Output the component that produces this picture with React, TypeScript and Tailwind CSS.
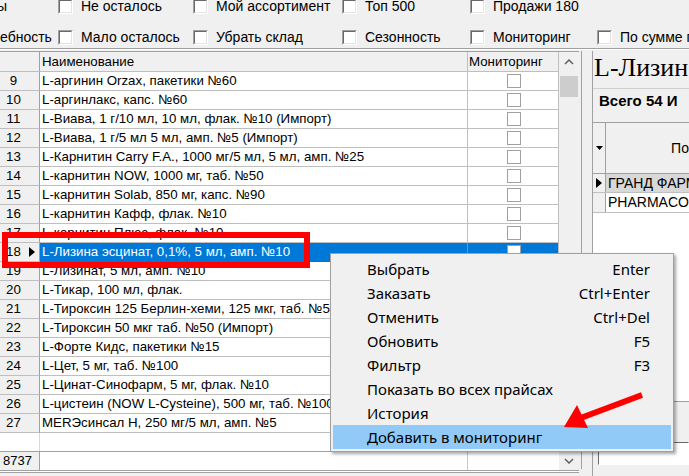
import React from "react";

const rows: [number, string][] = [
  [9, "L-аргинин Orzax, пакетики №60"],
  [10, "L-аргинлакс, капс. №60"],
  [11, "L-Виава, 1 г/10 мл, 10 мл, флак. №10 (Импорт)"],
  [12, "L-Виава, 1 г/5 мл 5 мл, амп. №5 (Импорт)"],
  [13, "L-Карнитин Carry F.A., 1000 мг/5 мл, 5 мл, амп. №25"],
  [14, "L-карнитин NOW, 1000 мг, таб. №50"],
  [15, "L-карнитин Solab, 850 мг, капс. №90"],
  [16, "L-карнитин Кафф, флак. №10"],
  [17, "L-карнитин Плюс, флак. №10"],
  [18, "L-Лизина эсцинат, 0,1%, 5 мл, амп. №10"],
  [19, "L-Лизинат, 5 мл, амп. №10"],
  [20, "L-Тикар, 100 мл, флак."],
  [21, "L-Тироксин 125 Берлин-хеми, 125 мкг, таб. №50 (Импорт)"],
  [22, "L-Тироксин 50 мкг таб. №50 (Импорт)"],
  [23, "L-Форте Кидс, пакетики №15"],
  [24, "L-Цет, 5 мг, таб. №100"],
  [25, "L-Цинат-Синофарм, 5 мг, флак. №10"],
  [26, "L-цистеин (NOW L-Cysteine), 500 мг, таб. №100"],
  [27, "MERЭсинсал Н, 250 мг/5 мл, амп. №5"],
];

const menu: [string, string][] = [
  ["Выбрать", "Enter"],
  ["Заказать", "Ctrl+Enter"],
  ["Отменить", "Ctrl+Del"],
  ["Обновить", "F5"],
  ["Фильтр", "F3"],
  ["Показать во всех прайсах", ""],
  ["История", ""],
  ["Добавить в мониторинг", ""],
];

function Check3D() {
  return (
    <div className="w-[15px] h-[15px] shrink-0 border border-t-[#a0a0a0] border-l-[#a0a0a0] border-b-white border-r-white">
      <div className="w-full h-full bg-white border border-t-[#696969] border-l-[#696969] border-b-[#e3e3e3] border-r-[#e3e3e3]" />
    </div>
  );
}

function CheckCell({ w, label }: { w: string; label: string }) {
  return (
    <div className={`${w} flex items-center shrink-0`}>
      <Check3D />
      <span className="ml-[8px] whitespace-nowrap">{label}</span>
    </div>
  );
}

function Tri({ className }: { className?: string }) {
  return (
    <svg width="6" height="10" viewBox="0 0 6 10" className={className}>
      <polygon points="0,0 6,5 0,10" fill="#000" />
    </svg>
  );
}

export default function App() {
  return (
    <div
      className="relative w-[689px] h-[476px] overflow-hidden bg-[#f0f0f0] text-black"
      style={{ fontFamily: '"Liberation Sans", Arial, sans-serif' }}
    >
      {/* Top filter checkboxes */}
      <div className="h-[49px] border-b border-[#a0a0a0] overflow-hidden text-[14px] leading-[15px]">
        <div className="flex h-[15px] mt-[-1px]">
          <div className="w-[58px] shrink-0 flex items-center">
            <span className="ml-[-3px]">ы</span>
          </div>
          <CheckCell w="w-[135px]" label="Не осталось" />
          <CheckCell w="w-[149px]" label="Мой ассортимент" />
          <CheckCell w="w-[128px]" label="Топ 500" />
          <CheckCell w="w-[127px]" label="Продажи 180" />
        </div>
        <div className="flex h-[15px] mt-[16px]">
          <div className="w-[58px] shrink-0 flex items-center overflow-hidden">
            <span className="whitespace-nowrap">ебность</span>
          </div>
          <CheckCell w="w-[135px]" label="Мало осталось" />
          <CheckCell w="w-[149px]" label="Убрать склад" />
          <CheckCell w="w-[128px]" label="Сезонность" />
          <CheckCell w="w-[127px]" label="Мониторинг" />
          <CheckCell w="w-[200px]" label="По сумме продаж" />
        </div>
      </div>
      <div className="h-[1px] bg-white" />
      <div className="h-[1px]" />

      {/* Main */}
      <div className="flex h-[425px]">
        {/* Left block */}
        <div className="w-[579px] shrink-0 flex flex-col">
          <div className="flex h-[401px]">
            {/* Grid */}
            <div className="w-[559px] flex flex-col border-t border-[#a0a0a0] text-[13.3px]">
              {/* header */}
              <div className="flex h-[20px] bg-[#f0f0f0] border-b border-[#bfbfbf]">
                <div className="w-[40px] border-r border-[#a0a0a0]" />
                <div className="w-[428px] border-r border-[#bfbfbf] pl-[2px] leading-[19px] whitespace-nowrap">
                  Наименование
                </div>
                <div className="w-[91px] border-r border-[#bfbfbf] pl-[1px] leading-[19px] whitespace-nowrap overflow-hidden">
                  Мониторинг
                </div>
              </div>
              {rows.map(([n, name]) => {
                const sel = n === 18;
                return (
                  <div key={n} className="flex h-[19px] shrink-0">
                    <div className="w-[40px] bg-[#f0f0f0] border-r border-[#a0a0a0] border-b border-b-[#bfbfbf] flex items-center">
                      <span className="w-[27px] text-center leading-[18px]">{n}</span>
                      {sel && <Tri className="ml-[2px]" />}
                    </div>
                    <div
                      className={`w-[428px] border-r border-b ${
                        sel ? "bg-[#0078d7] text-white border-r-[#4a9fe3] border-b-[#0078d7]" : "bg-white border-[#bfbfbf]"
                      } pl-[2px] leading-[18px] whitespace-nowrap overflow-hidden`}
                    >
                      {name}
                    </div>
                    <div
                      className={`w-[91px] border-r border-b flex justify-center items-center ${
                        sel ? "bg-[#0078d7] border-r-[#bfbfbf] border-b-[#0078d7]" : "bg-white border-[#bfbfbf]"
                      }`}
                    >
                      <div className="w-[14px] h-[14px] bg-white border border-[#a0a0a0] ml-[2px]" />
                    </div>
                  </div>
                );
              })}
              {/* empty row */}
              <div className="flex h-[19px] bg-white border-b border-[#a0a0a0]">
                <div className="w-[40px] border-r border-[#d8d8d8]" />
                <div className="flex-1" />
              </div>
            </div>
            {/* Scrollbar */}
            <div className="w-[20px] flex flex-col bg-[#f0f0f0] border-t border-[#a0a0a0]">
              <div className="h-[20px] flex items-center justify-center">
                <svg width="10" height="6" viewBox="0 0 10 6">
                  <polyline points="1,5 5,1 9,5" fill="none" stroke="#606060" strokeWidth="1.5" />
                </svg>
              </div>
              <div className="mt-[4px] h-[21px] bg-[#cdcdcd] mx-[1px]" />
            </div>
          </div>
          {/* footer */}
          <div className="flex h-[19px] text-[13px] border-b border-[#a0a0a0]">
            <div className="w-[40px] bg-[#f0f0f0] border-r border-[#a0a0a0] pl-[3px] leading-[18px]">8737</div>
            <div className="w-[428px] bg-white border-r border-[#c8c8c8]" />
            <div className="w-[91px] bg-white" />
            <div className="w-[20px] bg-[#f0f0f0] flex items-center justify-center">
              <svg width="10" height="6" viewBox="0 0 10 6">
                <polyline points="1,1 5,5 9,1" fill="none" stroke="#606060" strokeWidth="1.5" />
              </svg>
            </div>
          </div>
          <div className="h-[1px] bg-white" />
          <div className="h-[1px] bg-[#a0a0a0]" />
        </div>
        <div className="w-[2px] shrink-0" />
        <div className="w-[1px] shrink-0 bg-[#a0a0a0] h-[418px]" />
        <div className="w-[10px] shrink-0" />

        {/* Right panel */}
        <div className="flex-1 min-w-0 border-l border-[#a0a0a0] flex flex-col overflow-hidden">
          <div className="h-[38px] border-b border-[#d0d0d0] pt-[4px] pl-[1px] shrink-0">
            <div
              className="text-[26px] leading-[26px] whitespace-nowrap"
              style={{ fontFamily: '"Liberation Serif", "Times New Roman", serif' }}
            >
              L-Лизин эсцинат
            </div>
          </div>
          <div className="h-[33px] pt-[3px] pl-[6px] shrink-0 text-[15px] font-bold leading-[18px] whitespace-nowrap">
            Всего 54 И
          </div>
          <div className="h-[280px] shrink-0 bg-white border-t border-b border-[#a0a0a0] text-[14px] flex flex-col">
            <div className="flex h-[51px] bg-[#f0f0f0] border-b border-[#a0a0a0] shrink-0">
              <div className="w-[13px] shrink-0 border-r border-[#a0a0a0] flex items-center justify-center">
                <svg width="7" height="4" viewBox="0 0 7 4">
                  <polygon points="0,0 7,0 3.5,4" fill="#000" />
                </svg>
              </div>
              <div className="w-[202px] shrink-0 flex items-center justify-center whitespace-nowrap">
                Поставщик
              </div>
            </div>
            <div className="flex h-[19px] shrink-0 border-b border-[#bfbfbf] bg-[#d8d8d8]">
              <div className="w-[13px] shrink-0 border-r border-[#a0a0a0] bg-[#f0f0f0] flex items-center justify-center">
                <Tri />
              </div>
              <div className="pl-[2px] leading-[18px] whitespace-nowrap">ГРАНД ФАРМ ООО</div>
            </div>
            <div className="flex h-[20px] shrink-0 border-b border-[#bfbfbf]">
              <div className="w-[13px] shrink-0 border-r border-[#a0a0a0] bg-[#f0f0f0]" />
              <div className="pl-[2px] leading-[19px] whitespace-nowrap">PHARMACOSMETICS</div>
            </div>
          </div>
          <div className="pt-[40px] pl-[5px]">
            <div className="h-[23px] bg-white border border-t-[#696969] border-l-[#696969] border-r-white border-b-white" />
          </div>
        </div>
      </div>

      {/* Red highlight box */}
      <div className="absolute left-[2px] top-[232px] w-[308px] h-[36px] border-[6px] border-[#ff0000]" />

      {/* Context menu */}
      <div
        className="absolute left-[330px] top-[253px] w-[344px] bg-[#f0f0f0] border border-[#a0a0a0] shadow-[2px_2px_3px_rgba(0,0,0,0.35)] pt-[3px] pb-[2px] px-[2px] text-[15px] text-[#000]"
        style={{ fontFamily: '"Noto Sans", "Open Sans", sans-serif' }}
      >
        {menu.map(([label, key], i) => (
          <div
            key={label}
            className={`flex justify-between items-center h-[24px] pl-[34px] pr-[21px] ${
              i === menu.length - 1 ? "bg-[#91c9f7]" : ""
            }`}
          >
            <span className="whitespace-nowrap">{label}</span>
            <span className="whitespace-nowrap">{key}</span>
          </div>
        ))}
      </div>

      {/* Red arrow */}
      <svg className="absolute left-0 top-0 pointer-events-none" width="689" height="476" viewBox="0 0 689 476">
        <line x1="642" y1="395" x2="578" y2="419" stroke="#ff0000" strokeWidth="6" />
        <polygon points="564,427 577,405 588,428" fill="#ff0000" />
      </svg>
    </div>
  );
}
